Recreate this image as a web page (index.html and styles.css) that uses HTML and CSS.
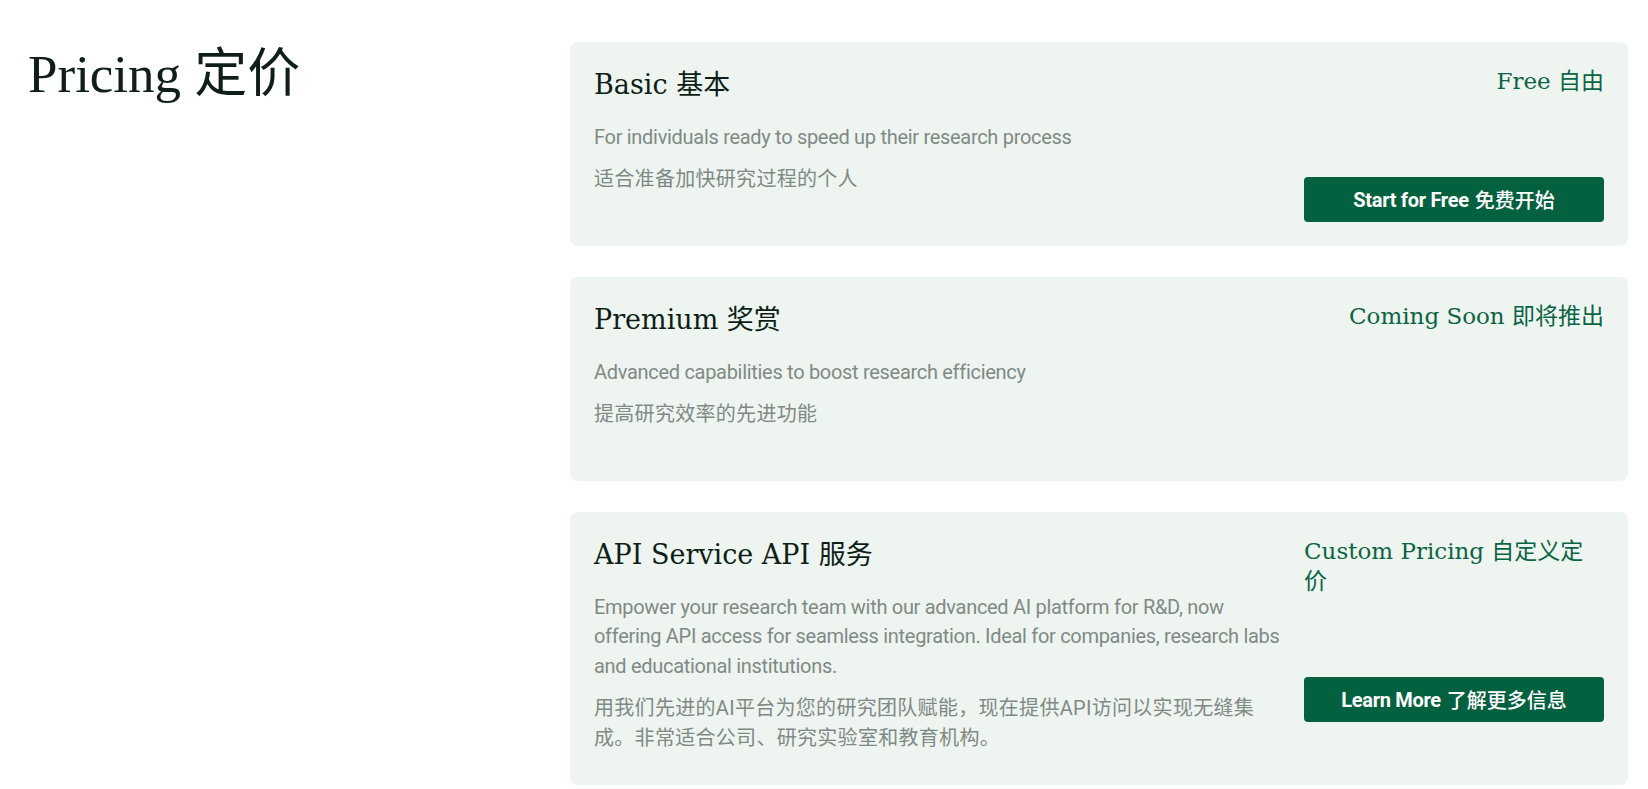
FILE: index.html
```html
<!DOCTYPE html>
<html lang="zh-CN">
<head>
    <meta charset="UTF-8">
    <meta name="viewport" content="width=device-width, initial-scale=1.0">
    <title>Pricing 定价</title>
    <link rel="stylesheet" href="styles.css">
</head>
<body>
    <section class="pricing">
        <div class="pricing-side">
            <h1 class="pricing-title">Pricing 定价</h1>
        </div>

        <div class="plans">
            <div class="plan">
                <div class="plan-info">
                    <h2 class="plan-name">Basic 基本</h2>
                    <p class="plan-desc">For individuals ready to speed up their research process</p>
                    <p class="plan-desc zh">适合准备加快研究过程的个人</p>
                </div>
                <div class="plan-action">
                    <div class="plan-price">Free 自由</div>
                    <a href="#" class="btn">Start for Free <span class="btn-zh">免费开始</span></a>
                </div>
            </div>

            <div class="plan">
                <div class="plan-info">
                    <h2 class="plan-name">Premium 奖赏</h2>
                    <p class="plan-desc">Advanced capabilities to boost research efficiency</p>
                    <p class="plan-desc zh">提高研究效率的先进功能</p>
                </div>
                <div class="plan-action">
                    <div class="plan-price">Coming Soon 即将推出</div>
                </div>
            </div>

            <div class="plan">
                <div class="plan-info">
                    <h2 class="plan-name">API Service API 服务</h2>
                    <p class="plan-desc">Empower your research team with our advanced AI platform for R&amp;D, now offering API access for seamless integration. Ideal for companies, research labs and educational institutions.</p>
                    <p class="plan-desc zh">用我们先进的AI平台为您的研究团队赋能，现在提供API访问以实现无缝集成。非常适合公司、研究实验室和教育机构。</p>
                </div>
                <div class="plan-action">
                    <div class="plan-price">Custom Pricing 自定义定价</div>
                    <a href="#" class="btn">Learn More <span class="btn-zh">了解更多信息</span></a>
                </div>
            </div>
        </div>
    </section>
</body>
</html>
```

FILE: styles.css
```css
* {
    margin: 0;
    padding: 0;
    box-sizing: border-box;
}

body {
    background: #fff;
    font-family: Roboto, 'Noto Sans CJK SC', sans-serif;
}

.pricing {
    display: flex;
    padding: 42px 20px 0 28px;
}

.pricing-side {
    flex: 0 0 542px;
}

.pricing-title {
    font-family: 'Liberation Serif', 'Noto Sans CJK SC', serif;
    font-weight: 400;
    font-size: 53px;
    line-height: 64px;
    color: #0f1f18;
}

.plans {
    flex: 1;
    display: flex;
    flex-direction: column;
    gap: 31px;
}

.plan {
    display: flex;
    gap: 24px;
    min-height: 204px;
    padding: 24px;
    background: #eef4f0;
    border-radius: 8px;
}

.plan-info {
    flex: 1;
}

.plan-name {
    font-family: 'DejaVu Serif', 'Noto Sans CJK SC', serif;
    font-weight: 400;
    font-size: 27px;
    line-height: 38px;
    color: #0d1f17;
    margin-bottom: 19px;
}

.plan-desc {
    font-size: 20px;
    line-height: 1.47;
    letter-spacing: -0.3px;
    color: #7f8a85;
    margin-bottom: 13px;
}

.plan-desc:last-child {
    margin-bottom: 8px;
}

.plan-desc.zh {
    letter-spacing: 0.3px;
}

.plan-action {
    flex: 0 0 300px;
    display: flex;
    flex-direction: column;
}

.plan-price {
    align-self: flex-end;
    font-family: 'DejaVu Serif', 'Noto Sans CJK SC', serif;
    font-size: 23px;
    line-height: 30px;
    color: #0b6443;
}

.plan-action .btn {
    margin-top: 81px;
}

.btn {
    display: flex;
    align-items: center;
    justify-content: center;
    gap: 6px;
    height: 45px;
    background: #04613f;
    color: #fff;
    border-radius: 4px;
    font-size: 20px;
    font-weight: 700;
    letter-spacing: -0.3px;
    text-decoration: none;
}

.btn-zh {
    font-weight: 500;
    letter-spacing: 0;
}
```
